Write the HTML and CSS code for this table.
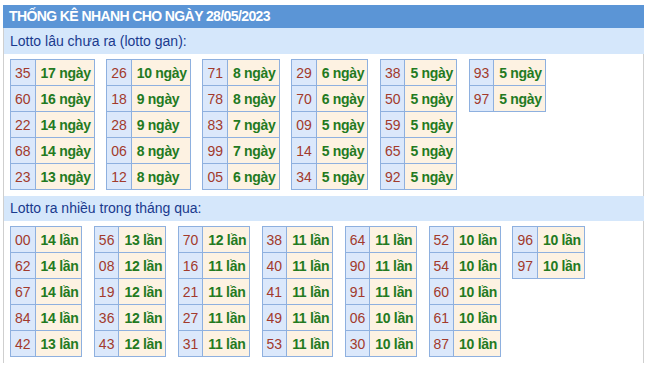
FILE: index.html
```html
<!DOCTYPE html>
<html lang="vi">
<head>
<meta charset="utf-8">
<title>Thống kê nhanh</title>
<link rel="stylesheet" href="styles.css">
</head>
<body>
<div class="box">
  <div class="title">THỐNG KÊ NHANH CHO NGÀY 28/05/2023</div>
  <div class="sub sub1">Lotto lâu chưa ra (lotto gan):</div>
  <div class="tables tables1">
    <table class="t"><tr><td class="n">35</td><td class="v">17 ngày</td></tr><tr><td class="n">60</td><td class="v">16 ngày</td></tr><tr><td class="n">22</td><td class="v">14 ngày</td></tr><tr><td class="n">68</td><td class="v">14 ngày</td></tr><tr><td class="n">23</td><td class="v">13 ngày</td></tr></table>
    <table class="t"><tr><td class="n">26</td><td class="v">10 ngày</td></tr><tr><td class="n">18</td><td class="v">9 ngày</td></tr><tr><td class="n">28</td><td class="v">9 ngày</td></tr><tr><td class="n">06</td><td class="v">8 ngày</td></tr><tr><td class="n">12</td><td class="v">8 ngày</td></tr></table>
    <table class="t"><tr><td class="n">71</td><td class="v">8 ngày</td></tr><tr><td class="n">78</td><td class="v">8 ngày</td></tr><tr><td class="n">83</td><td class="v">7 ngày</td></tr><tr><td class="n">99</td><td class="v">7 ngày</td></tr><tr><td class="n">05</td><td class="v">6 ngày</td></tr></table>
    <table class="t"><tr><td class="n">29</td><td class="v">6 ngày</td></tr><tr><td class="n">70</td><td class="v">6 ngày</td></tr><tr><td class="n">09</td><td class="v">5 ngày</td></tr><tr><td class="n">14</td><td class="v">5 ngày</td></tr><tr><td class="n">34</td><td class="v">5 ngày</td></tr></table>
    <table class="t"><tr><td class="n">38</td><td class="v">5 ngày</td></tr><tr><td class="n">50</td><td class="v">5 ngày</td></tr><tr><td class="n">59</td><td class="v">5 ngày</td></tr><tr><td class="n">65</td><td class="v">5 ngày</td></tr><tr><td class="n">92</td><td class="v">5 ngày</td></tr></table>
    <table class="t"><tr><td class="n">93</td><td class="v">5 ngày</td></tr><tr><td class="n">97</td><td class="v">5 ngày</td></tr></table>
  </div>
  <div class="sub sub2">Lotto ra nhiều trong tháng qua:</div>
  <div class="tables tables2">
    <table class="t"><tr><td class="n">00</td><td class="v">14 lần</td></tr><tr><td class="n">62</td><td class="v">14 lần</td></tr><tr><td class="n">67</td><td class="v">14 lần</td></tr><tr><td class="n">84</td><td class="v">14 lần</td></tr><tr><td class="n">42</td><td class="v">13 lần</td></tr></table>
    <table class="t"><tr><td class="n">56</td><td class="v">13 lần</td></tr><tr><td class="n">08</td><td class="v">12 lần</td></tr><tr><td class="n">19</td><td class="v">12 lần</td></tr><tr><td class="n">36</td><td class="v">12 lần</td></tr><tr><td class="n">43</td><td class="v">12 lần</td></tr></table>
    <table class="t"><tr><td class="n">70</td><td class="v">12 lần</td></tr><tr><td class="n">16</td><td class="v">11 lần</td></tr><tr><td class="n">21</td><td class="v">11 lần</td></tr><tr><td class="n">27</td><td class="v">11 lần</td></tr><tr><td class="n">31</td><td class="v">11 lần</td></tr></table>
    <table class="t"><tr><td class="n">38</td><td class="v">11 lần</td></tr><tr><td class="n">40</td><td class="v">11 lần</td></tr><tr><td class="n">41</td><td class="v">11 lần</td></tr><tr><td class="n">49</td><td class="v">11 lần</td></tr><tr><td class="n">53</td><td class="v">11 lần</td></tr></table>
    <table class="t"><tr><td class="n">64</td><td class="v">11 lần</td></tr><tr><td class="n">90</td><td class="v">11 lần</td></tr><tr><td class="n">91</td><td class="v">11 lần</td></tr><tr><td class="n">06</td><td class="v">10 lần</td></tr><tr><td class="n">30</td><td class="v">10 lần</td></tr></table>
    <table class="t"><tr><td class="n">52</td><td class="v">10 lần</td></tr><tr><td class="n">54</td><td class="v">10 lần</td></tr><tr><td class="n">60</td><td class="v">10 lần</td></tr><tr><td class="n">61</td><td class="v">10 lần</td></tr><tr><td class="n">87</td><td class="v">10 lần</td></tr></table>
    <table class="t"><tr><td class="n">96</td><td class="v">10 lần</td></tr><tr><td class="n">97</td><td class="v">10 lần</td></tr></table>
  </div>
</div>
</body>
</html>
```

FILE: styles.css
```css
html, body {
  background: #ffffff;
}
body {
  margin: 5px 4px 0 3px;
  font-family: "Liberation Sans", Arial, sans-serif;
}
.box {
  width: 639px;
  min-height: 358px;
  border-left: 1px solid #cfcfcf;
  border-right: 1px solid #cfcfcf;
}
.title {
  margin: 0 -1px;
  height: 23px;
  line-height: 23px;
  padding-left: 6px;
  background: #5b95d6;
  color: #ffffff;
  font-weight: bold;
  font-size: 14px;
  letter-spacing: -0.6px;
}
.sub {
  margin: 0 -1px 0 0;
  padding-left: 6px;
  background: #d5e7fb;
  color: #1a3a8e;
  font-size: 14px;
}
.sub1 {
  height: 26px;
  line-height: 26px;
}
.sub2 {
  height: 25px;
  line-height: 24px;
}
.tables {
  display: flex;
  align-items: flex-start;
  padding-left: 6px;
}
.tables1 {
  padding-top: 5px;
  padding-bottom: 6px;
  gap: 11.6px;
}
.tables2 {
  padding-top: 5px;
  gap: 11.4px;
}
.t {
  border-collapse: collapse;
  font-size: 14px;
}
.t td {
  border: 1px solid #8eb0df;
  height: 25px;
  white-space: nowrap;
}
.t td.n {
  padding: 0 4px;
  background: #dbe8fb;
  color: #a23a2c;
  text-align: center;
}
.t td.v {
  padding: 0 3px 0 5px;
  background: #fdf2e2;
  color: #237a1f;
  font-weight: bold;
  letter-spacing: -0.3px;
}
```
